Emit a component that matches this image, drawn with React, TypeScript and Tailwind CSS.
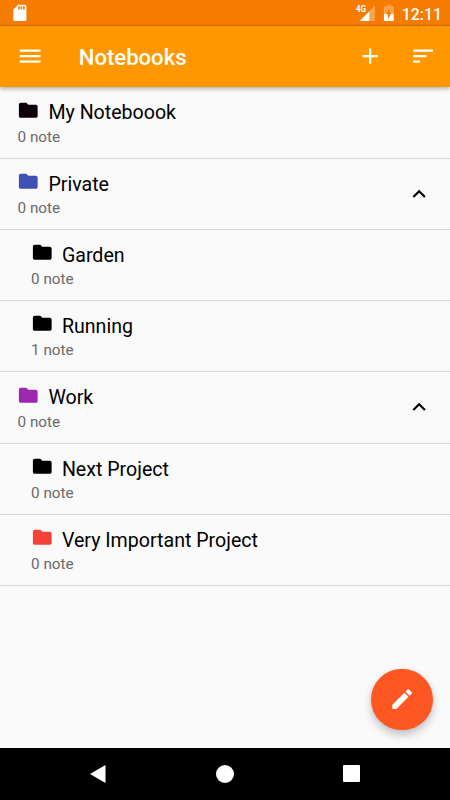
import type { ReactNode } from "react";
import clsx from "clsx";

interface Notebook {
  name: string;
  count: number;
  color: string;
  nested?: boolean;
  expanded?: boolean;
}

const notebooks: Notebook[] = [
  { name: "My Noteboook", count: 0, color: "text-[#0b0009]" },
  { name: "Private", count: 0, color: "text-[#3f51b5]", expanded: true },
  { name: "Garden", count: 0, color: "text-black", nested: true },
  { name: "Running", count: 1, color: "text-black", nested: true },
  { name: "Work", count: 0, color: "text-[#9c27b0]", expanded: true },
  { name: "Next Project", count: 0, color: "text-black", nested: true },
  { name: "Very Important Project", count: 0, color: "text-[#f44336]", nested: true },
];

export default function App() {
  return (
    <div className="flex h-[800px] w-[450px] flex-col overflow-hidden bg-[#fafafa] font-[Roboto,sans-serif] text-black">
      <StatusBar />
      <AppBar />
      <main className="relative flex-1 pt-[0.4px]">
        <ul>
          {notebooks.map((notebook) => (
            <NotebookRow key={notebook.name} notebook={notebook} />
          ))}
        </ul>
        <button
          aria-label="New note"
          className="absolute right-[17.5px] bottom-[17.5px] flex size-[61.25px] items-center justify-center rounded-full bg-[#ff5722] text-white shadow-[0_5px_8px_rgba(0,0,0,0.22),0_0_3px_rgba(0,0,0,0.1)]"
        >
          <Icon className="size-[26.25px]">
            <path d="M3 17.25V21h3.75L17.81 9.94l-3.75-3.75L3 17.25zM20.71 7.04a1 1 0 0 0 0-1.41l-2.34-2.34a1 1 0 0 0-1.41 0l-1.83 1.83 3.75 3.75 1.83-1.83z" />
          </Icon>
        </button>
      </main>
      <NavigationBar />
    </div>
  );
}

function Icon({ className, children }: { className?: string; children: ReactNode }) {
  return (
    <svg viewBox="0 0 24 24" fill="currentColor" className={clsx("shrink-0", className)}>
      {children}
    </svg>
  );
}

function StatusBar() {
  return (
    <div className="flex h-[26px] shrink-0 items-center bg-[#f57c00] pr-[8px] pl-[10px] text-white shadow-[inset_0_-2px_1px_-1px_rgba(0,0,0,0.15)]">
      <Icon className="size-[19.7px]">
        <path d="M18 2h-8L4.02 8 4 20c0 1.1.9 2 2 2h12c1.1 0 2-.9 2-2V4c0-1.1-.9-2-2-2zm-6 6h-2V4h2v4zm3 0h-2V4h2v4zm3 0h-2V4h2v4z" />
      </Icon>
      <div className="ml-auto flex items-center">
        <svg width="20" height="26" viewBox="0 0 20 26" fill="currentColor">
          <path d="M19 5.5V21h-9V14.5z" opacity=".3" />
          <path d="M13.3 11.2V21H3.7z" />
          <text x="0" y="12" fontSize="8.8" fontWeight="700" textLength="10" lengthAdjust="spacingAndGlyphs">
            4G
          </text>
        </svg>
        <Icon className="ml-[3px] size-[19.7px]">
          <path opacity=".3" d="M15.67 4H14V2h-4v2H8.33C7.6 4 6 4.6 6 5.33V13h12V5.33C18 4.6 16.4 4 15.67 4z" />
          <path d="M6 13h12v7.67c0 .73-.6 1.33-1.33 1.33H7.34C6.6 22 6 21.4 6 20.67V13z" />
          <path className="fill-[#f57c00]" d="M13 6.5v5.5h2.2L11 19.5V14H8.8z" />
        </Icon>
        <span className="ml-[3px] pt-[3px] text-[15.9px] leading-none font-medium">12:11</span>
      </div>
    </div>
  );
}

function AppBar() {
  return (
    <header className="z-10 flex h-[61px] shrink-0 items-center bg-[#ff9800] pr-[13.5px] pl-[17px] text-white shadow-[0_2px_4px_rgba(0,0,0,0.28)]">
      <Icon className="size-[26.25px]">
        <path d="M2.5 18h19v-2h-19v2zm0-5h19v-2h-19v2zm0-7v2h19V6h-19z" />
      </Icon>
      <h1 className="ml-[35.5px] pt-[2px] text-[22.1px] leading-none font-medium">Notebooks</h1>
      <div className="ml-auto flex items-center gap-[26.75px]">
        <Icon className="size-[26.25px]">
          <path d="M19 13h-6v6h-2v-6H5v-2h6V5h2v6h6v2z" />
        </Icon>
        <Icon className="size-[26.25px]">
          <path d="M3 18h6v-2H3v2zM3 6v2h18V6H3zm0 7h12v-2H3v2z" />
        </Icon>
      </div>
    </header>
  );
}

function NotebookRow({ notebook }: { notebook: Notebook }) {
  return (
    <li
      className={clsx(
        "flex h-[71.25px] items-center border-b border-[#d6d6d6] pr-[17.5px]",
        notebook.nested ? "pl-[31px]" : "pl-[17.5px]"
      )}
    >
      <div className="flex-1">
        <div className="flex h-[28px] items-start">
          <Icon className={clsx("-ml-[0.3px] size-[22.5px]", notebook.color)}>
            <path d="M10 4H4c-1.1 0-1.99.9-1.99 2L2 18c0 1.1.9 2 2 2h16c1.1 0 2-.9 2-2V8c0-1.1-.9-2-2-2h-8l-2-2z" />
          </Icon>
          <span className="ml-[8.7px] pt-[4.8px] text-[19.6px] leading-[20px]">{notebook.name}</span>
        </div>
        <p className="text-[15.3px] leading-[20px] text-[#6b6b6b]">{notebook.count} note</p>
      </div>
      {notebook.expanded && (
        <Icon className="size-[26.25px]">
          <path d="M12 8l-6 6 1.41 1.41L12 10.83l4.59 4.58L18 14z" />
        </Icon>
      )}
    </li>
  );
}

function NavigationBar() {
  return (
    <nav className="flex h-[52.5px] shrink-0 items-center justify-between bg-black px-[90px] text-white">
      <svg width="16" height="18" viewBox="0 0 16 18" fill="currentColor">
        <path d="M15.5 0v18L0 9z" />
      </svg>
      <div className="size-[18px] rounded-full bg-white" />
      <div className="size-[17px] rounded-[1px] bg-white" />
    </nav>
  );
}
